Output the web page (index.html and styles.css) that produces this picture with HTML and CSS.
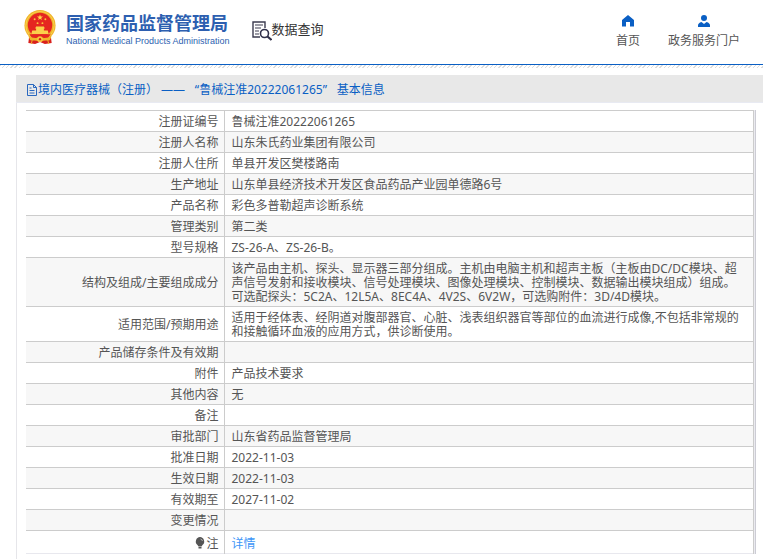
FILE: index.html
```html
<!DOCTYPE html>
<html lang="zh-CN">
<head>
<meta charset="utf-8">
<title>数据查询</title>
<link rel="stylesheet" href="styles.css">
</head>
<body>
<header class="site-header">
  <a class="brand" href="#">
    <svg class="emblem" viewBox="0 0 32 36" aria-hidden="true">
      <path d="M5 26 L4 34 L11 35 L16 33 L21 35 L28 34 L27 26Z" fill="#d9201c"/>
      <circle cx="16" cy="16" r="16" fill="#f0b429"/>
      <circle cx="16" cy="16" r="14.6" fill="none" stroke="#f8d052" stroke-width="1"/>
      <circle cx="16" cy="15.500" r="12.600" fill="#e52620"/>
      <path d="M16 4.500l.8 2.200h2.300l-1.900 1.400.7 2.200-1.900-1.300-1.900 1.300.7-2.200-1.900-1.400h2.300z" fill="#ffd94a"/>
      <g fill="#f9c53a"><circle cx="10.500" cy="9.500" r="1"/><circle cx="21.500" cy="9.500" r="1"/><circle cx="13.500" cy="13.500" r="1"/><circle cx="18.500" cy="13.500" r="1"/></g>
      <path d="M11 19l1-2h8l1 2zM12 19h8v2h-8zM8 21h16l1 4H7z" fill="#fbd04b"/>
      <path d="M5 25h22l-3 4H8z" fill="#e52620"/>
      <path d="M4 27q6 3 12 1q6 2 12-1l-2 4q-5 1-10-1q-5 2-10 1z" fill="#f0b429"/>
      <circle cx="16" cy="30" r="3" fill="#f7c63c"/>
      <circle cx="16" cy="30" r="1.200" fill="#d9201c"/>
      <path d="M8 31l-1 4M24 31l1 4" stroke="#f0b429" stroke-width="1"/>
    </svg>
    <span class="brand-text">
      <span class="brand-cn">国家药品监督管理局</span>
      <span class="brand-en">National Medical Products Administration</span>
    </span>
  </a>
  <div class="section">
    <svg class="section-icon" viewBox="0 0 20 20" aria-hidden="true">
      <path d="M8 16H1V1h12v6" fill="none" stroke="#3c3c50" stroke-width="1.400"/>
      <path d="M3 4h8M3 7h6M3 10h4M3 13h4" stroke="#3c3c50" stroke-width="1.200"/>
      <circle cx="12.500" cy="12.500" r="4" fill="#fff" stroke="#30304a" stroke-width="1.600"/>
      <path d="M15.500 15.500l4 3.500" stroke="#30304a" stroke-width="2.200"/>
    </svg>
    <span>数据查询</span>
  </div>
  <nav class="nav">
    <a href="#">
      <svg viewBox="0 0 12 12" aria-hidden="true"><path d="M6 0L0 5v6.500h4V7h4v4.500h4V5z" fill="#0a5fc4"/></svg>
      <span>首页</span>
    </a>
    <a href="#">
      <svg viewBox="0 0 12 12" aria-hidden="true"><circle cx="6" cy="3" r="3" fill="#0a5fc4"/><path d="M0 12v-1.500Q0 8 3.500 7L6 9l2.500-2Q12 8 12 10.500V12z" fill="#0a5fc4"/></svg>
      <span>政务服务门户</span>
    </a>
  </nav>
</header>
<div class="hatch"></div>
<main class="panel">
  <h1 class="panel-title">
    <svg viewBox="0 0 12 12" aria-hidden="true"><path d="M1.500.5h6l3 3v8h-9zM7.500.5v3h3M3.500 4h2M3.500 6.500h5M3.500 9h5" fill="none" stroke="#2a68c0"/></svg>
    <span>境内医疗器械（注册） ——<span class="quote open">“</span>鲁械注准20222061265<span class="quote">”</span>基本信息</span>
  </h1>
  <div class="frame">
    <table class="info">
      <tbody>
        <tr><th scope="row">注册证编号</th><td>鲁械注准20222061265</td></tr>
        <tr><th scope="row">注册人名称</th><td>山东朱氏药业集团有限公司</td></tr>
        <tr><th scope="row">注册人住所</th><td>单县开发区樊楼路南</td></tr>
        <tr><th scope="row">生产地址</th><td>山东单县经济技术开发区食品药品产业园单德路6号</td></tr>
        <tr><th scope="row">产品名称</th><td>彩色多普勒超声诊断系统</td></tr>
        <tr><th scope="row">管理类别</th><td>第二类</td></tr>
        <tr><th scope="row">型号规格</th><td>ZS-26-A、ZS-26-B。</td></tr>
        <tr><th scope="row">结构及组成/主要组成成分</th><td>该产品由主机、探头、显示器三部分组成。主机由电脑主机和超声主板（主板由DC/DC模块、超声信号发射和接收模块、信号处理模块、图像处理模块、控制模块、数据输出模块组成）组成。可选配探头：5C2A、12L5A、8EC4A、4V2S、6V2W，可选购附件：3D/4D模块。</td></tr>
        <tr><th scope="row">适用范围/预期用途</th><td>适用于经体表、经阴道对腹部器官、心脏、浅表组织器官等部位的血流进行成像,不包括非常规的和接触循环血液的应用方式，供诊断使用。</td></tr>
        <tr><th scope="row">产品储存条件及有效期</th><td></td></tr>
        <tr><th scope="row">附件</th><td>产品技术要求</td></tr>
        <tr><th scope="row">其他内容</th><td>无</td></tr>
        <tr><th scope="row">备注</th><td></td></tr>
        <tr><th scope="row">审批部门</th><td>山东省药品监督管理局</td></tr>
        <tr><th scope="row">批准日期</th><td>2022-11-03</td></tr>
        <tr><th scope="row">生效日期</th><td>2022-11-03</td></tr>
        <tr><th scope="row">有效期至</th><td>2027-11-02</td></tr>
        <tr><th scope="row">变更情况</th><td></td></tr>
        <tr class="note"><th scope="row"><svg viewBox="0 0 10 12" aria-hidden="true"><path d="M5 0a4.500 4.500 0 0 1 2.500 8L6.500 9.500h-3L2.500 8A4.500 4.500 0 0 1 5 0zM3.500 10h3v1.500h-3z" fill="#555"/><path d="M5.500 2q1.500.3 2 2" fill="none" stroke="#ccc" stroke-width=".8"/></svg>注</th><td><a href="#">详情</a></td></tr>
      </tbody>
    </table>
  </div>
</main>
</body>
</html>
```
FILE: styles.css
```css
* {
  box-sizing: border-box;
}

body {
  display: flex;
  flex-direction: column;
  min-height: 100vh;
  margin: 0;
  background: #fff;
  color: #555;
  font: 12px/14px "Noto Sans", "Noto Sans CJK SC", sans-serif;
}

a {
  color: inherit;
  text-decoration: none;
}

.site-header {
  display: flex;
  align-items: flex-start;
  height: 65px;
  padding: 0 23px 0 24px;
  border-bottom: 1px solid #0a5fc4;
}

.brand {
  display: flex;
  gap: 10px;
  padding-top: 10px;
  color: #2d5fb0;
}

.emblem {
  width: 32px;
  height: 35px;
}

.brand-text {
  display: flex;
  flex-direction: column;
  white-space: nowrap;
}

.brand-cn {
  font-size: 18px;
  font-weight: 700;
  line-height: 26px;
}

.brand-en {
  font: 9px/10px "Liberation Sans", sans-serif;
}

.section {
  display: flex;
  align-items: center;
  margin: 17px 0 0 22px;
  color: #333;
  font-size: 13px;
  line-height: 20px;
}

.section-icon {
  width: 20px;
  height: 20px;
  margin-top: 4px;
}

.nav {
  display: flex;
  gap: 28px;
  margin: 15px 0 0 auto;
}

.nav a {
  display: flex;
  flex-direction: column;
  align-items: center;
  gap: 7px;
}

.nav svg {
  width: 12px;
  height: 12px;
}

.hatch {
  height: 3px;
  margin-bottom: 7px;
  background: repeating-linear-gradient(135deg, #ddd 0 1px, #fff 1px 3px);
}

.panel {
  flex: 1;
  margin-left: 16px;
  border-left: 1px solid #e6e6ea;
}

.panel-title {
  display: flex;
  align-items: center;
  height: 28px;
  margin: 0 0 0 -1px;
  padding: 2px 0 0 10px;
  border-bottom: 1px solid #e8eaf2;
  background: #e8e8e8;
  color: #0a5fc4;
  font-size: 12px;
  font-weight: 400;
}

.panel-title svg {
  width: 12px;
  height: 12px;
}

.quote {
  display: inline-block;
  width: 14px;
}

.quote.open {
  text-align: right;
}

.frame {
  margin: 7px 7px 0 9px;
  padding-right: 1px;
  border-right: 1px solid #ccccd4;
  background: #ebebf0;
}

.info {
  width: 100%;
  border-collapse: collapse;
  border-bottom: 1px solid #e8e8ee;
  background: #fff;
}

.info th,
.info td {
  height: 21px;
  padding: 4px 7px 2px;
  border-top: 1px solid #ccc;
  border-right: 1px solid #ccc;
  font-weight: 400;
}

.info th {
  width: 198px;
  padding-right: 5px;
  text-align: right;
}

.info td {
  text-align: left;
}

.info tr:nth-child(even) {
  background: #f7f7f7;
}

.info .note th,
.info .note td {
  height: 23px;
  padding-top: 6px;
}

.note svg {
  width: 10px;
  height: 12px;
  margin-right: 1px;
  vertical-align: -1px;
}

.note a {
  color: #3d96f7;
}
```
